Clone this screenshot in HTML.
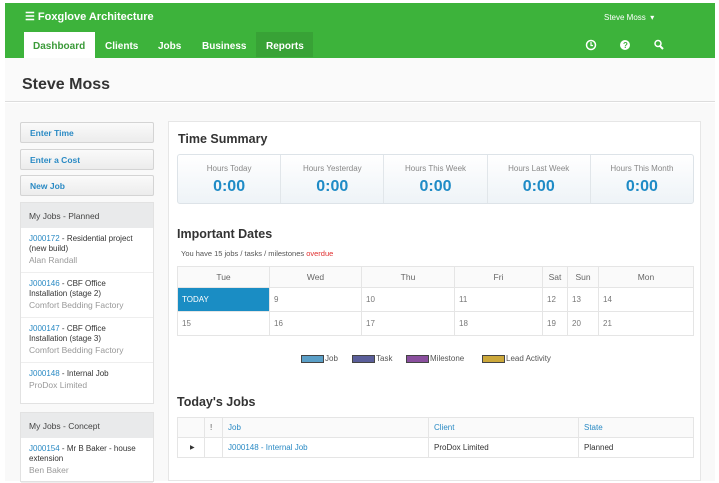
<!DOCTYPE html>
<html><head><meta charset="utf-8"><style>
*{box-sizing:border-box;margin:0;padding:0}
body{width:719px;height:481px;overflow:hidden;background:#fff;font-family:"Liberation Sans",Arial,sans-serif;position:relative;color:#333}
.a{position:absolute}
.hdr{left:5px;top:3px;width:710px;height:55px;background:#3db33b}
.nav{color:#fff;font-size:10px;font-weight:bold;top:41px}
.band{left:5px;top:58px;width:710px;height:44px;background:#fafafa;border-bottom:1px solid #ddd}
.main-bg{left:5px;top:103px;width:710px;height:378px;background:#f9f9f9}
.btn{left:20px;width:134px;height:21px;border:1px solid #d4d4d4;border-radius:2px;background:linear-gradient(#fafafa,#ececec);font-size:8.5px;font-weight:bold;color:#2a8ac4;padding:5px 0 0 9px}
.pan{left:20px;width:134px;background:#fff;border:1px solid #e2e2e2}
.ph{height:25px;background:#e9eaeb;font-size:8.5px;color:#444;padding:8px 0 0 8px}
.it{padding:6px 8px 5px 8px;font-size:8px;line-height:10px;color:#333;border-bottom:1px solid #eee}
.it a{color:#2a8ac4;text-decoration:none}
.it .g{color:#999;font-size:8.5px;line-height:13px}
.card{left:168px;top:121px;width:533px;height:360px;background:#fff;border:1px solid #e6e6e6}
h2{position:absolute;font-size:12.5px;font-weight:bold;color:#333}
.ts{left:177px;top:154px;width:517px;height:50px;border:1px solid #dde3e8;border-radius:3px;background:linear-gradient(#fff,#eef3f7);display:flex}
.ts div{flex:1;border-right:1px solid #e1e6ea;text-align:center;font-size:8px;color:#888;padding-top:9px}
.ts div:last-child{border:none}
.ts b{display:block;font-size:16px;color:#1f8bc6;margin-top:5px}
table{border-collapse:collapse;position:absolute;font-size:8px}
td,th{border:1px solid #e5e5e5;font-weight:normal}
.cal th{height:21px;color:#666;font-size:8.5px;background:#fafafa}
.cal td{height:24px;color:#777;padding-left:4px}
.lg{top:354px;font-size:8px;color:#555}
.lg span{display:inline-block;width:23px;height:8px;border:1px solid #444;vertical-align:middle;margin-right:1px}
.tj th{height:20px;text-align:left;color:#2a8ac4;padding-left:5px;background:#fafafa}
.tj td{height:20px;padding-left:5px;color:#333}
</style></head><body>
<div class="a hdr"></div>
<div class="a" style="left:25px;top:10px;color:#fff;font-size:11px;font-weight:bold">☰ Foxglove Architecture</div>
<div class="a" style="left:604px;top:13px;color:#fff;font-size:8px">Steve Moss &nbsp;▾</div>
<div class="a" style="left:24px;top:32px;width:71px;height:26px;background:#fff"></div>
<div class="a" style="left:256px;top:32px;width:57px;height:25px;background:#38a236"></div>
<div class="a nav" style="left:33px;color:#3a9a38">Dashboard</div>
<div class="a nav" style="left:105px">Clients</div>
<div class="a nav" style="left:158px">Jobs</div>
<div class="a nav" style="left:202px">Business</div>
<div class="a nav" style="left:266px">Reports</div>
<svg class="a" style="left:585px;top:38px" width="85" height="14"><circle cx="6" cy="7" r="4.5" fill="none" stroke="#fff" stroke-width="1.5"/><path d="M6 4v3.5h2" stroke="#fff" stroke-width="1.2" fill="none"/><circle cx="40" cy="7" r="5" fill="#fff"/><text x="38" y="10" font-size="8" font-weight="bold" fill="#3db33b" font-family="Liberation Sans">?</text><circle cx="73" cy="5.5" r="3" fill="none" stroke="#fff" stroke-width="1.5"/><path d="M75 8l3 3" stroke="#fff" stroke-width="2"/></svg>
<div class="a band"></div>
<div class="a" style="left:22px;top:76px;font-size:16px;font-weight:bold;color:#333">Steve Moss</div>
<div class="a main-bg"></div>
<div class="a btn" style="top:122px">Enter Time</div>
<div class="a btn" style="top:149px">Enter a Cost</div>
<div class="a btn" style="top:175px">New Job</div>
<div class="a pan" style="top:202px;height:202px">
<div class="ph">My Jobs - Planned</div>
<div class="it"><a>J000172</a> - Residential project (new build)<div class="g">Alan Randall</div></div>
<div class="it"><a>J000146</a> - CBF Office Installation (stage 2)<div class="g">Comfort Bedding Factory</div></div>
<div class="it"><a>J000147</a> - CBF Office Installation (stage 3)<div class="g">Comfort Bedding Factory</div></div>
<div class="it" style="border:none"><a>J000148</a> - Internal Job<div class="g">ProDox Limited</div></div>
</div>
<div class="a pan" style="top:412px;height:70px">
<div class="ph">My Jobs - Concept</div>
<div class="it"><a>J000154</a> - Mr B Baker - house extension<div class="g">Ben Baker</div></div>
</div>
<div class="a card"></div>
<h2 style="left:178px;top:132px">Time Summary</h2>
<div class="a ts"><div>Hours Today<b>0:00</b></div><div>Hours Yesterday<b>0:00</b></div><div>Hours This Week<b>0:00</b></div><div>Hours Last Week<b>0:00</b></div><div>Hours This Month<b>0:00</b></div></div>
<h2 style="left:177px;top:227px">Important Dates</h2>
<div class="a" style="left:181px;top:249px;font-size:7.5px;color:#555">You have 15 jobs / tasks / milestones <span style="color:#e03030">overdue</span></div>
<table class="cal" style="left:177px;top:266px;width:517px">
<tr><th style="width:92px">Tue</th><th style="width:92px">Wed</th><th style="width:93px">Thu</th><th style="width:88px">Fri</th><th style="width:25px">Sat</th><th style="width:31px">Sun</th><th>Mon</th></tr>
<tr><td style="background:#1a8dc4;color:#fff">TODAY</td><td>9</td><td>10</td><td>11</td><td>12</td><td>13</td><td>14</td></tr>
<tr><td>15</td><td>16</td><td>17</td><td>18</td><td>19</td><td>20</td><td>21</td></tr>
</table>
<div class="a lg" style="left:301px"><span style="background:#5a9fc7"></span>Job</div>
<div class="a lg" style="left:352px"><span style="background:#5a5e9a"></span>Task</div>
<div class="a lg" style="left:406px"><span style="background:#8a4f9e"></span>Milestone</div>
<div class="a lg" style="left:482px"><span style="background:#cca83a"></span>Lead Activity</div>
<h2 style="left:177px;top:395px">Today's Jobs</h2>
<table class="tj" style="left:177px;top:417px;width:517px">
<tr><th style="width:27px"></th><th style="width:18px;color:#555">!</th><th style="width:206px">Job</th><th style="width:150px">Client</th><th>State</th></tr>
<tr><td style="font-size:6px;padding-left:12px">▶</td><td></td><td style="color:#2a8ac4">J000148 - Internal Job</td><td>ProDox Limited</td><td>Planned</td></tr>
</table>
</body></html>
